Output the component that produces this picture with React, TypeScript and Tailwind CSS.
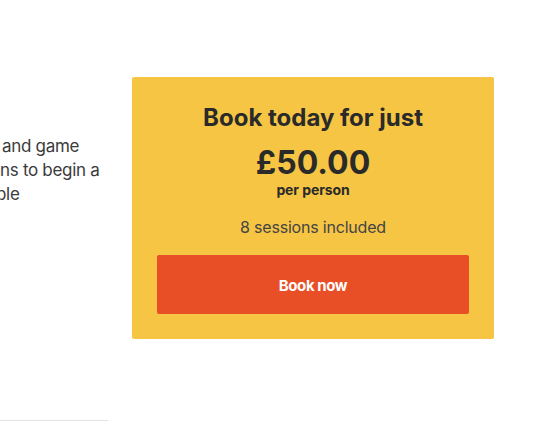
export default function App() {
  return (
    <div className="min-h-[429px] overflow-hidden bg-white font-['Inter',sans-serif] text-[#2b2b2b]">
      <div className="flex items-start pt-[77px]">
        {/* Left column: text spills in from off-screen */}
        <div className="w-[108px] shrink-0">
          <div className="pt-[57px] text-[17px] leading-[24px] text-[#3a3a3a] tracking-[-0.3px] whitespace-nowrap">
            <p className="pl-[2px]">and game</p>
            <p>ns to begin a</p>
            <p className="-ml-[4px]">ple</p>
          </div>
          <div className="mt-[214px] border-t border-[#e3e3e3]" />
        </div>

        {/* Pricing card */}
        <div className="ml-[24px] w-[362px] rounded-[2px] bg-[#f6c544] px-[25px] pt-[25px] pb-[25px] text-center">
          <h2 className="text-[24px] leading-[32px] font-bold text-[#2a2a2a]">
            Book today for just
          </h2>
          <div className="mt-[11px] text-[32px] leading-[36px] font-bold text-[#2a2a2a]">£50.00</div>
          <div className="text-[14px] leading-[18px] font-bold tracking-[-0.1px] text-[#2a2a2a]">per person</div>
          <div className="mt-[17px] text-[16px] leading-[22px] text-[#444] tracking-[-0.2px]">8 sessions included</div>
          <button className="mt-[17px] flex h-[59px] w-full items-center justify-center rounded-[2px] bg-[#e94f26] pt-[4px] text-[15px] font-bold tracking-[-0.4px] text-white">
            Book now
          </button>
        </div>
      </div>
    </div>
  );
}
